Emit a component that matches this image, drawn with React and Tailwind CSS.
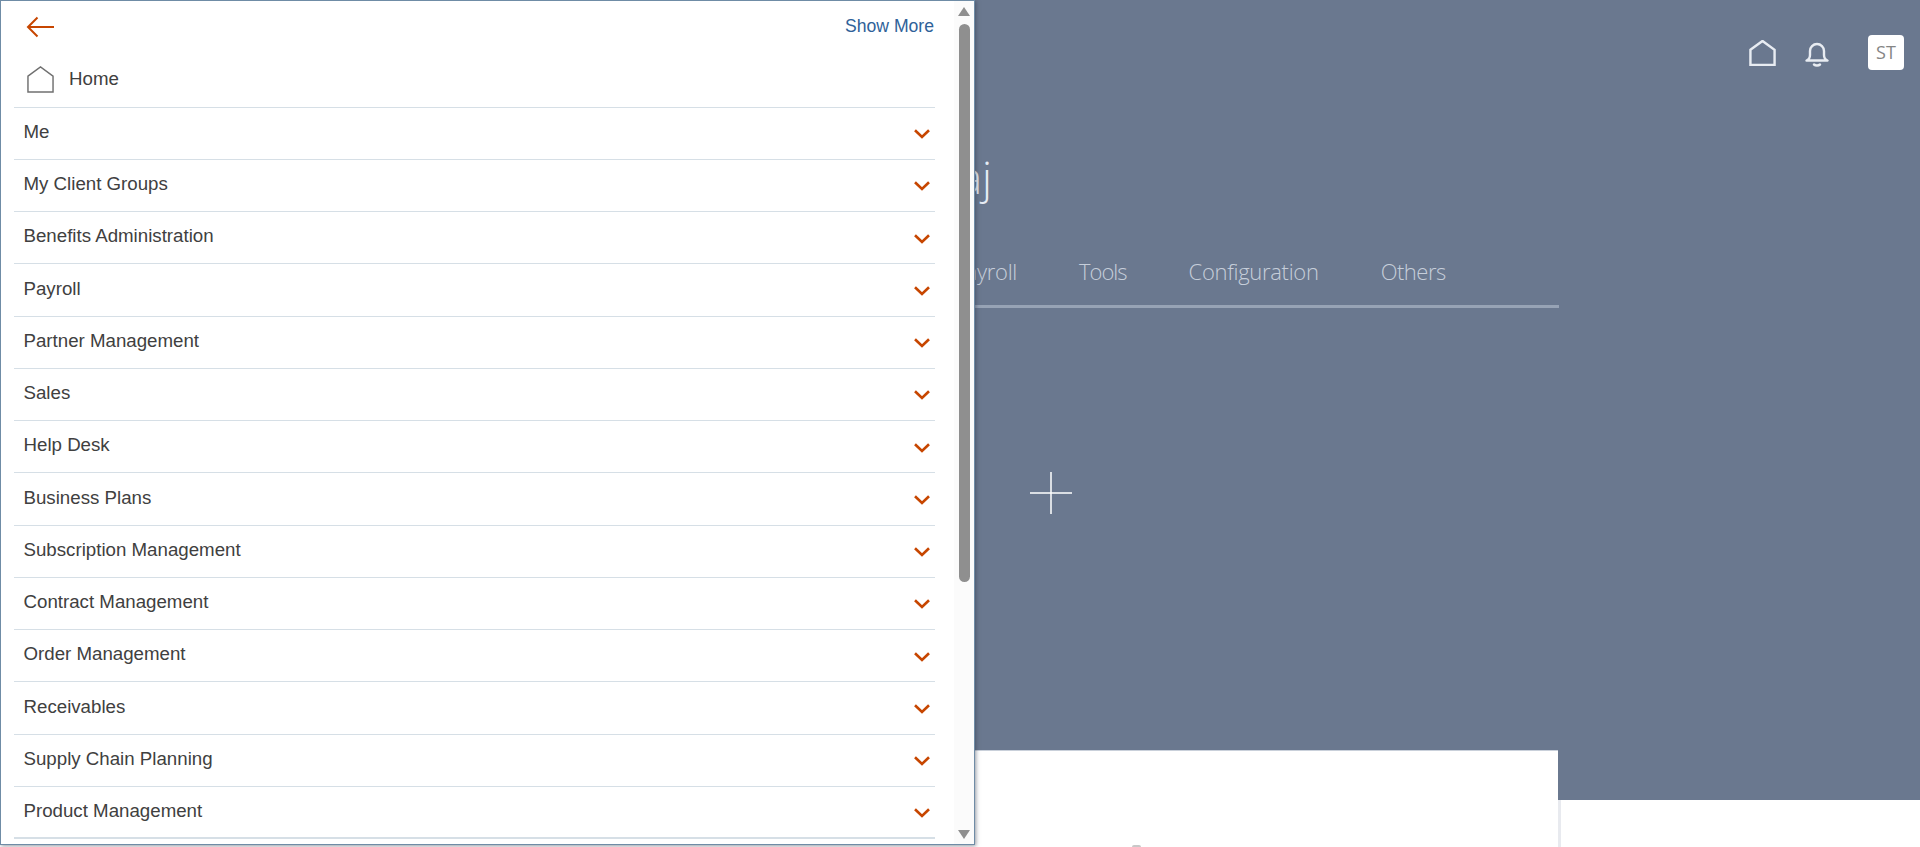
import React from "react";

const menuItems = [
  "Me",
  "My Client Groups",
  "Benefits Administration",
  "Payroll",
  "Partner Management",
  "Sales",
  "Help Desk",
  "Business Plans",
  "Subscription Management",
  "Contract Management",
  "Order Management",
  "Receivables",
  "Supply Chain Planning",
  "Product Management",
];

const HomeIcon = ({ className, stroke, width }) => (
  <svg viewBox="0 0 28 28" fill="none" className={className}>
    <path d="M1 10.5 14 1l13 9.5V27H1z" stroke={stroke} strokeWidth={width} />
  </svg>
);

const Chevron = () => (
  <svg viewBox="0 0 16 10" fill="none" className="mt-[2px] w-4 h-2.5">
    <path d="M1 1.2 8 8l7-6.8" stroke="#c74600" strokeWidth="2.6" />
  </svg>
);

const NavPanel = () => (
  <aside className="absolute left-0 top-0 z-10 flex h-[845px] w-[975px] border border-[#6f8ca6] bg-white shadow-[1px_1px_4px_rgba(40,50,70,0.5)]">
    <div className="flex-1 overflow-hidden pl-[13px] pr-[19px]">
      <div className="flex h-[51px] items-center justify-between pl-[12px] pr-px">
        <svg viewBox="0 0 28 22" fill="none" className="w-[28px] h-[22px]">
          <path d="M28 11H2M11.5 1.5 2 11l9.5 9.5" stroke="#c74600" strokeWidth="2" />
        </svg>
        <a className="text-[17.6px] text-[#2f6299]">Show More</a>
      </div>
      <div className="flex h-[55.5px] items-center gap-[15px] border-b border-[#d6dfe6] pl-[13px]">
        <HomeIcon className="w-[27px] h-[27px]" stroke="#707070" width="1.5" />
        <span className="text-[18.7px] text-[#404040]">Home</span>
      </div>
      {menuItems.map((item, i) => (
        <div
          key={item}
          className={`flex h-[52.25px] items-center justify-between pl-[9.5px] pr-[5px] border-[#d6dfe6] ${
            i === menuItems.length - 1 ? "border-b-2" : "border-b"
          }`}
        >
          <span className="text-[18.7px] leading-none text-[#404040] -mt-[2px]">{item}</span>
          <Chevron />
        </div>
      ))}
    </div>
    {/* Scrollbar */}
    <div className="flex w-[20px] shrink-0 flex-col items-center bg-[#fbfbfb] pt-[6px]">
      <div className="h-0 w-0 border-x-[6.5px] border-b-[9px] border-x-transparent border-b-[#8f8f8f]" />
      <div className="mt-[8px] h-[558px] w-[11px] rounded-[6px] bg-[#8f8f8f]" />
      <div className="mt-auto mb-[5px] h-0 w-0 border-x-[6.5px] border-t-[9px] border-x-transparent border-t-[#8f8f8f]" />
    </div>
  </aside>
);

export default function App() {
  return (
    <div className="relative h-screen overflow-hidden bg-white font-['Liberation_Sans',sans-serif]">
      <NavPanel />

      <div className="h-[800px] bg-[#6a788f]">
        {/* Top bar */}
        <header className="flex h-[142px] items-start justify-end gap-[28px] pr-[16px] pt-[35px]">
          <HomeIcon className="mt-[5px] w-[27px] h-[26px]" stroke="#e8ecf2" width="2.6" />
          <svg viewBox="0 0 24 26" fill="none" className="mt-[6px] ml-px mr-[11px] w-[24px] h-[26px]">
            <path
              d="M1.5 19.5c2.5-1 3.5-3 3.5-5.5v-4a7 7 0 0 1 14 0v4c0 2.500 1 4.500 3.500 5.500zM9 23.500c1.500 1.400 4.500 1.400 6 0"
              stroke="#e8ecf2"
              strokeWidth="2.4"
              strokeLinecap="round"
              strokeLinejoin="round"
            />
          </svg>
          <div className="flex h-[35px] w-[36px] items-center justify-center rounded-[4px] bg-white text-[18px] text-[#858585] font-['Open_Sans',sans-serif]">
            ST
          </div>
        </header>

        <div className="w-[1559px] pl-[960px] font-['Open_Sans',sans-serif] font-light">
          <h1 className="h-[96px] w-[32px] text-[44px] leading-[70px] text-[#e6ecf4] whitespace-nowrap flex justify-end">
            aj
          </h1>
          <nav className="flex h-[70px] items-center gap-[62px] -ml-[960px] pl-[961px] border-b-[3px] border-[#97a3b5] text-[22px] tracking-[-0.3px] text-[#c6ceda]">
            <span className="-ml-[3px] w-[59px] overflow-hidden whitespace-nowrap text-right">ayroll</span>
            <span className="tracking-[-1px]">Tools</span>
            <span>Configuration</span>
            <span className="tracking-[-0.5px]">Others</span>
          </nav>
          <svg viewBox="0 0 42 42" className="ml-[70px] mt-[164px] w-[42px] h-[42px]" stroke="#ffffff" strokeWidth="1.5">
            <path d="M21 0v42M0 21h42" />
          </svg>
        </div>
      </div>

      {/* Card overlapping the dark hero, white band under it */}
      <div className="-mt-[50px] h-[50px] w-[1558px] border-t border-t-[#c9d0da] bg-white" />
      <div className="h-[47px] w-[1561px] border-r-[3px] border-r-[#e8eaef] bg-white pl-[1132px] pt-[45px]">
        <div className="h-[2px] w-[9px] rounded-t-full bg-[#c8c8c8]" />
      </div>
    </div>
  );
}
